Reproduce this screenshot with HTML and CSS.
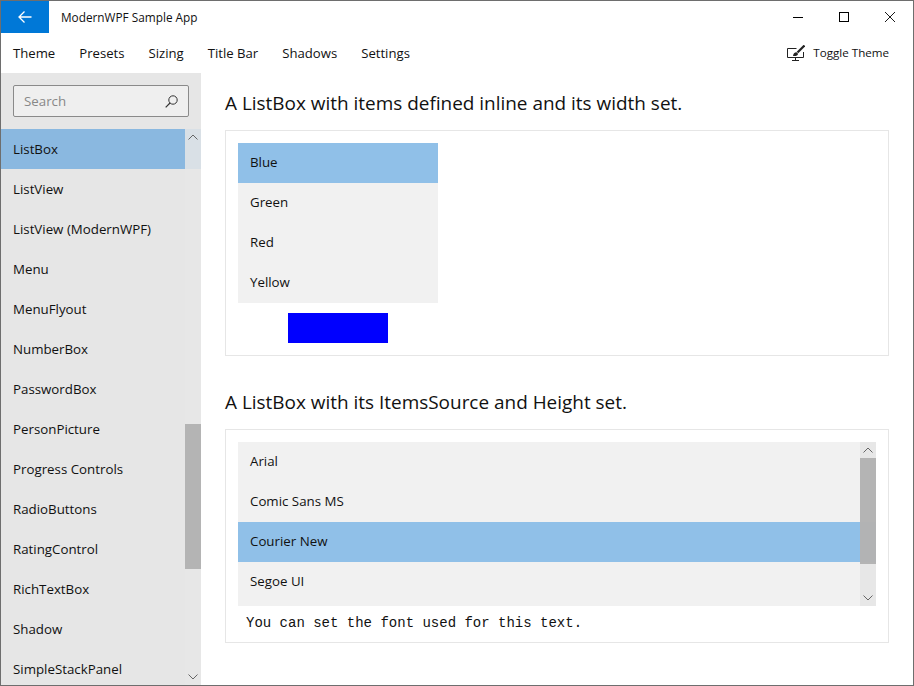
FILE: index.html
```html
<!DOCTYPE html>
<html lang="en">
<head>
    <meta charset="UTF-8">
    <title>ModernWPF Sample App</title>
    <link rel="stylesheet" href="styles.css">
</head>
<body>
    <div class="window">
        <div class="titlebar">
            <div class="back-btn">
                <svg width="16" height="16" viewBox="0 0 16 16"><path d="M14.5 8H2M7.5 2.5L2 8l5.500 5.500" fill="none" stroke="#fff" stroke-width="1.300"/></svg>
            </div>
            <div class="app-title">ModernWPF Sample App</div>
            <div class="caption-btns">
                <div class="caption-btn"><svg width="10" height="10" viewBox="0 0 10 10"><path d="M0 5.500h10" stroke="#000" fill="none"/></svg></div>
                <div class="caption-btn"><svg width="10" height="10" viewBox="0 0 10 10"><rect x=".5" y=".5" width="9" height="9" stroke="#000" fill="none"/></svg></div>
                <div class="caption-btn"><svg width="10" height="10" viewBox="0 0 10 10"><path d="M0 0l10 10M10 0L0 10" stroke="#000" stroke-width=".9" fill="none"/></svg></div>
            </div>
        </div>
        <div class="menubar">
            <span class="menu-item">Theme</span>
            <span class="menu-item">Presets</span>
            <span class="menu-item">Sizing</span>
            <span class="menu-item">Title Bar</span>
            <span class="menu-item">Shadows</span>
            <span class="menu-item">Settings</span>
            <div class="toggle-theme">
                <svg width="18" height="16" viewBox="0 0 18 16"><path d="M9.500 3.500H.5v9h16V7M5 15.500h7M8.500 12.500v3" fill="none" stroke="#222"/><path d="M17.500.5L10.500 7.500" stroke="#222" stroke-width="2.200" fill="none"/><path d="M6 11c.2-2.300 1.500-3.800 3.500-3.800l1.500 1.500c0 1.800-2 2.600-5 2.300z" fill="#222"/></svg>
                <span>Toggle Theme</span>
            </div>
        </div>
        <div class="content">
            <div class="sidebar">
                <div class="search-wrap">
                    <div class="search-box">
                        <span>Search</span>
                        <svg width="13" height="13" viewBox="0 0 13 13"><circle cx="8" cy="5" r="4.200" fill="none" stroke="#333"/><path d="M5 8L.7 12.300" stroke="#333" stroke-width="1.200" fill="none"/></svg>
                    </div>
                </div>
                <div class="nav-list">
                    <div class="nav-item selected">ListBox</div>
                    <div class="nav-item">ListView</div>
                    <div class="nav-item">ListView (ModernWPF)</div>
                    <div class="nav-item">Menu</div>
                    <div class="nav-item">MenuFlyout</div>
                    <div class="nav-item">NumberBox</div>
                    <div class="nav-item">PasswordBox</div>
                    <div class="nav-item">PersonPicture</div>
                    <div class="nav-item">Progress Controls</div>
                    <div class="nav-item">RadioButtons</div>
                    <div class="nav-item">RatingControl</div>
                    <div class="nav-item">RichTextBox</div>
                    <div class="nav-item">Shadow</div>
                    <div class="nav-item">SimpleStackPanel</div>
                    <div class="scrollbar nav-scroll">
                        <svg class="arrow arrow-up" width="10" height="6" viewBox="0 0 10 6"><path d="M.5 5.500L5 1l4.500 4.500" fill="none" stroke="#666"/></svg>
                        <div class="thumb"></div>
                        <svg class="arrow arrow-down" width="10" height="6" viewBox="0 0 10 6"><path d="M.5.500L5 5 9.500.5" fill="none" stroke="#666"/></svg>
                    </div>
                </div>
            </div>
            <div class="main">
                <h2 class="example-title">A ListBox with items defined inline and its width set.</h2>
                <div class="example-panel first-panel">
                    <div class="listbox inline-list">
                        <div class="list-item selected">Blue</div>
                        <div class="list-item">Green</div>
                        <div class="list-item">Red</div>
                        <div class="list-item">Yellow</div>
                    </div>
                    <div class="blue-rect"></div>
                </div>
                <h2 class="example-title second-title">A ListBox with its ItemsSource and Height set.</h2>
                <div class="example-panel second-panel">
                    <div class="listbox fonts-list">
                        <div class="list-item">Arial</div>
                        <div class="list-item">Comic Sans MS</div>
                        <div class="list-item selected">Courier New</div>
                        <div class="list-item">Segoe UI</div>
                        <div class="scrollbar list-scroll">
                            <svg class="arrow arrow-up" width="10" height="6" viewBox="0 0 10 6"><path d="M.5 5.500L5 1l4.500 4.500" fill="none" stroke="#666"/></svg>
                            <div class="thumb"></div>
                            <svg class="arrow arrow-down" width="10" height="6" viewBox="0 0 10 6"><path d="M.5.500L5 5 9.500.5" fill="none" stroke="#666"/></svg>
                        </div>
                    </div>
                    <div class="sample-text">You can set the font used for this text.</div>
                </div>
            </div>
        </div>
    </div>
</body>
</html>
```

FILE: styles.css
```css
* {
    box-sizing: border-box;
}
html, body {
    margin: 0;
    height: 100%;
}
body {
    font-family: "Open Sans", "Noto Sans", sans-serif;
    font-size: 13.300px;
    color: #111;
    background: #fff;
}
.window {
    display: flex;
    flex-direction: column;
    width: 914px;
    height: 686px;
    border: 1px solid #6e6e6e;
    overflow: hidden;
}
.titlebar {
    display: flex;
    align-items: center;
    height: 32px;
    flex: none;
}
.back-btn {
    display: flex;
    align-items: center;
    justify-content: center;
    width: 48px;
    height: 32px;
    background: #0078d7;
}
.app-title {
    margin-left: 12px;
    font-size: 11.800px;
}
.caption-btns {
    display: flex;
    margin-left: auto;
}
.caption-btn {
    display: flex;
    align-items: center;
    justify-content: center;
    width: 46px;
    height: 32px;
}
.menubar {
    display: flex;
    align-items: center;
    flex: none;
    height: 40px;
    padding: 0 24px 0 12px;
    gap: 24px;
    font-size: 13.150px;
}
.toggle-theme {
    display: flex;
    align-items: center;
    gap: 8px;
    margin-left: auto;
    padding-bottom: 1px;
    font-size: 11.600px;
}
.content {
    display: flex;
    flex: 1;
    min-height: 0;
}
.sidebar {
    display: flex;
    flex-direction: column;
    flex: none;
    width: 200px;
    background: #e6e6e6;
}
.search-wrap {
    flex: none;
    padding: 12px;
}
.search-box {
    display: flex;
    align-items: center;
    justify-content: space-between;
    height: 32px;
    padding: 0 10px 0 10px;
    background: #efefef;
    border: 1px solid #8a8a8a;
    border-radius: 2px;
    color: #888;
}
.nav-list {
    position: relative;
    flex: none;
    height: 560px;
}
.nav-item {
    display: flex;
    align-items: center;
    height: 40px;
    padding-left: 12px;
}
.nav-item.selected {
    background: #8ab8e0;
}
.scrollbar {
    position: absolute;
    top: 0;
    right: 0;
    width: 16px;
}
.nav-scroll {
    height: 556px;
    background: rgba(230, 230, 230, 0.85);
}
.arrow {
    position: absolute;
    left: 3px;
}
.arrow-up {
    top: 5px;
}
.arrow-down {
    bottom: 5px;
}
.thumb {
    position: absolute;
    left: 0;
    right: 0;
    background: rgba(170, 170, 170, 0.85);
}
.nav-scroll .thumb {
    top: 295px;
    height: 145px;
}
.main {
    flex: 1;
    min-width: 0;
    padding: 16px 24px 0;
}
.example-title {
    margin: 0;
    height: 28px;
    font-size: 18.950px;
    font-weight: 400;
    line-height: 28px;
}
.second-title {
    margin-top: 32px;
    height: 27px;
}
.example-panel {
    border: 1px solid #e6e6e6;
    padding: 12px;
}
.first-panel {
    height: 226px;
    margin-top: 13px;
}
.second-panel {
    height: 214px;
    margin-top: 14px;
}
.listbox {
    position: relative;
    background: #f1f1f1;
}
.inline-list {
    width: 200px;
}
.fonts-list {
    height: 164px;
    overflow: hidden;
}
.list-item {
    display: flex;
    align-items: center;
    height: 40px;
    padding: 0 0 2px 12px;
}
.list-item.selected {
    background: #90c0e8;
}
.blue-rect {
    width: 100px;
    height: 30px;
    margin: 10px 0 0 50px;
    background: #0000ff;
}
.list-scroll {
    height: 164px;
    background: rgba(230, 230, 230, 0.9);
}
.list-scroll .thumb {
    top: 16px;
    height: 106px;
}
.sample-text {
    margin-top: 9px;
    padding-left: 8px;
    font-family: "Liberation Mono", monospace;
    font-size: 14px;
    line-height: 16px;
}
```
